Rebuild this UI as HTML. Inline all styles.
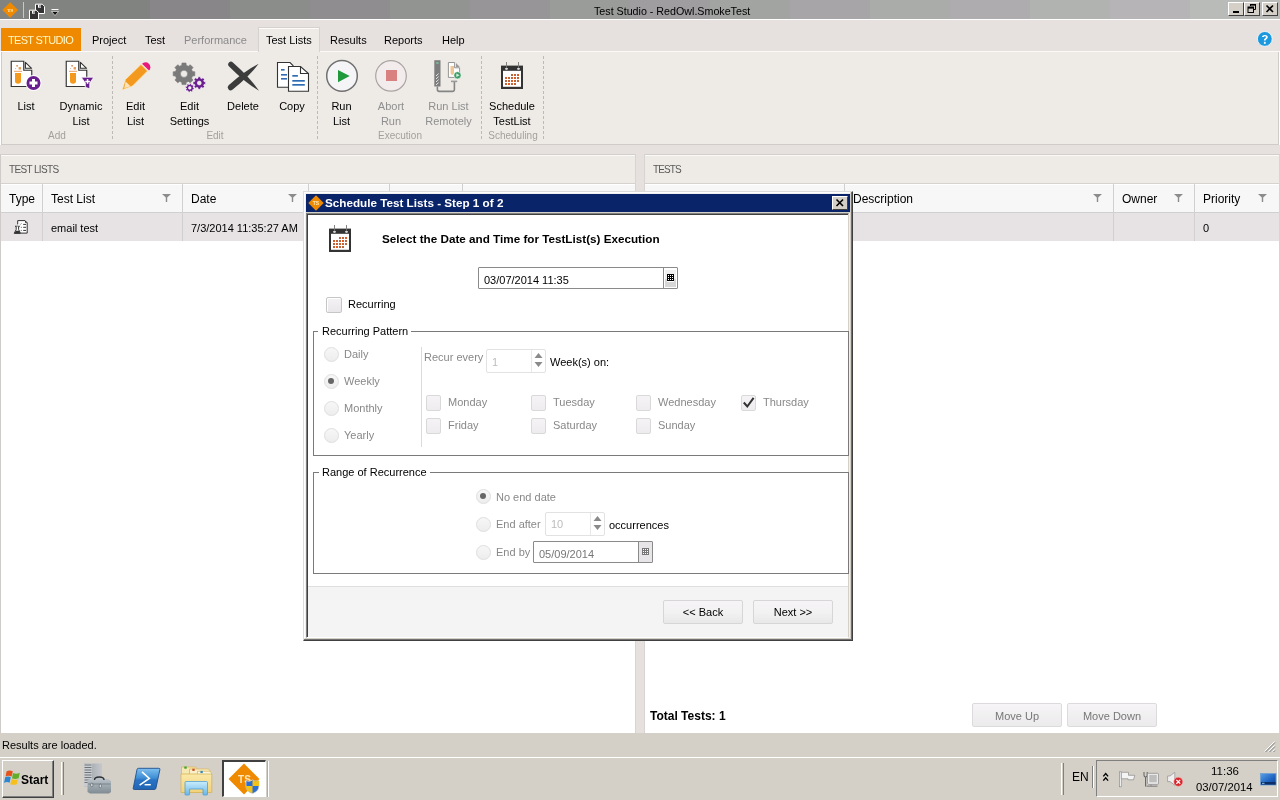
<!DOCTYPE html>
<html><head><meta charset="utf-8">
<style>
*{box-sizing:border-box;margin:0;padding:0}
html,body{width:1280px;height:800px;overflow:hidden;background:#fff}
body{position:relative;-webkit-font-smoothing:antialiased;font-family:"Liberation Sans",sans-serif;font-size:11px;color:#000}
.a{position:absolute}
.t{position:absolute;white-space:pre;line-height:1}
</style></head><body><div id="root" style="position:absolute;left:0;top:0;width:1280px;height:800px;overflow:hidden;will-change:transform">
<!-- TITLE BAR -->
<div class="a" id="titlebar" style="left:0;top:0;width:1280px;height:19px;background:linear-gradient(90deg,#80837f 0px,#80837f 150px,#888688 150px,#888688 230px,#8a8d89 230px,#8a8d89 310px,#8f8d8f 310px,#8f8d8f 390px,#919490 390px,#919490 470px,#979597 470px,#979597 550px,#999c98 550px,#999c98 630px,#9f9d9f 630px,#9f9d9f 710px,#a1a4a0 710px,#a1a4a0 790px,#a7a5a7 790px,#a7a5a7 870px,#a9aca8 870px,#a9aca8 950px,#aeacae 950px,#aeacae 1030px,#b0b3af 1030px,#b0b3af 1110px,#b6b4b6 1110px,#b6b4b6 1190px,#b8bbb7 1190px,#b8bbb7 1280px)"></div>
<div class="a" style="left:0;top:19px;width:1280px;height:1px;background:#fff"></div>
<div class="t" style="left:594px;top:6px;font-size:10.7px">Test Studio - RedOwl.SmokeTest</div>


<svg class="a" style="left:1px;top:1px" width="19" height="19" viewBox="0 0 19 19"><path d="M9.2 1.2 L17 9 L9.2 16.8 L1.4 9 Z" fill="#ef8a00"/><text x="9.2" y="10.8" font-family="Liberation Serif" font-size="5" font-weight="700" fill="#fff3c8" text-anchor="middle">TS</text></svg>
<div class="a" style="left:23px;top:2px;width:1px;height:16px;background:#c8c8c8"></div>
<svg class="a" style="left:28px;top:3px" width="18" height="17" viewBox="0 0 18 17"><path d="M7.5 1.2 H14.3 L16.5 3.4 V10.5 H7.5 Z" fill="#333" stroke="#fff" stroke-width="1"/><rect x="10" y="1.7" width="3" height="3" fill="#fff"/><rect x="11.5" y="2.2" width="1" height="2" fill="#333"/><path d="M1.5 7.2 H8.3 L10.5 9.4 V16.5 H1.5 Z" fill="#333" stroke="#fff" stroke-width="1"/><rect x="4" y="7.7" width="3" height="3" fill="#fff"/><rect x="5.5" y="8.2" width="1" height="2" fill="#333"/></svg>
<svg class="a" style="left:50px;top:7px" width="10" height="10" viewBox="0 0 10 10"><rect x="1.5" y="2" width="7" height="1" fill="#fff"/><path d="M1.5 4.5 H8.5 L5 8.5 Z" fill="#111" stroke="#fff" stroke-width="0.6"/></svg>
<!-- window buttons -->
<div class="a" style="left:1228px;top:2px;width:16px;height:14px;background:#d4d0c8;border-style:solid;border-width:1px;border-color:#fff #404040 #404040 #fff"></div>
<div class="a" style="left:1233px;top:11px;width:6px;height:2px;background:#000"></div>
<div class="a" style="left:1244px;top:2px;width:16px;height:14px;background:#d4d0c8;border-style:solid;border-width:1px;border-color:#fff #404040 #404040 #fff"></div>
<svg class="a" style="left:1244px;top:2px" width="16" height="14" viewBox="0 0 16 14"><path d="M6.5 2.5 H11.5 V7.5 H10 M6.5 2.5 V4" fill="none" stroke="#000" stroke-width="1"/><rect x="6" y="2" width="6" height="1.6" fill="#000"/><rect x="4" y="5" width="5.5" height="5.5" fill="none" stroke="#000" stroke-width="1"/><rect x="4" y="5" width="5.5" height="1.6" fill="#000"/></svg>
<div class="a" style="left:1262px;top:2px;width:16px;height:14px;background:#d4d0c8;border-style:solid;border-width:1px;border-color:#fff #404040 #404040 #fff"></div>
<svg class="a" style="left:1262px;top:2px" width="16" height="14" viewBox="0 0 16 14"><path d="M4.5 3.5 L11 10 M11 3.5 L4.5 10" stroke="#000" stroke-width="1.6"/></svg>

<!-- RIBBON TABS ROW -->
<div class="a" style="left:0;top:20px;width:1280px;height:31px;background:#e6e0df"></div>
<div class="a" style="left:1px;top:28px;width:80px;height:23px;background:#ef8a00"></div>
<div class="t" style="left:8px;top:35px;color:#fff8c8;font-size:11px;letter-spacing:-0.68px">TEST STUDIO</div>

<!-- RIBBON BODY -->
<div class="a" style="left:1px;top:51px;width:1278px;height:94px;background:#eeebe7;border:1px solid #cfcbc8;border-top:none"></div>


<!-- RIBBON TAB TEXTS -->
<div class="a" style="left:1px;top:51px;width:1278px;height:1px;background:#fbfaf9"></div><div class="a" style="left:258px;top:27px;width:62px;height:25px;background:#eeebe7;border:1px solid #d6d2cf;border-bottom:none;box-shadow:inset 0 1px 0 #fdfcfb"></div>
<div class="t" style="left:92px;top:35px">Project</div>
<div class="t" style="left:145px;top:35px">Test</div>
<div class="t" style="left:184px;top:35px;color:#8a8a8a">Performance</div>
<div class="t" style="left:266px;top:35px">Test Lists</div>
<div class="t" style="left:330px;top:35px">Results</div>
<div class="t" style="left:384px;top:35px">Reports</div>
<div class="t" style="left:442px;top:35px">Help</div>
<!-- help icon -->
<svg class="a" style="left:1257px;top:31px" width="16" height="16" viewBox="0 0 16 16"><circle cx="7.8" cy="7.9" r="7.4" fill="#1b98de" stroke="#fff" stroke-width="0.8"/><path d="M5 6 C5 3.2 10.8 3.2 10.8 6 C10.8 8 8.6 8 8.6 9.6 H6.9 C6.9 7.2 9 7.4 9 6 C9 5 6.8 5 6.8 6 Z" fill="#fff"/><rect x="6.9" y="10.8" width="1.8" height="2" fill="#fff"/></svg>

<!-- RIBBON BUTTON LABELS -->
<div class="t" style="left:0;width:52px;text-align:center;top:101px">List</div>
<div class="t" style="left:51px;width:60px;text-align:center;top:101px">Dynamic</div>
<div class="t" style="left:51px;width:60px;text-align:center;top:116px">List</div>
<div class="t" style="left:113px;width:45px;text-align:center;top:101px">Edit</div>
<div class="t" style="left:113px;width:45px;text-align:center;top:116px">List</div>
<div class="t" style="left:160px;width:59px;text-align:center;top:101px">Edit</div>
<div class="t" style="left:160px;width:59px;text-align:center;top:116px">Settings</div>
<div class="t" style="left:220px;width:46px;text-align:center;top:101px">Delete</div>
<div class="t" style="left:268px;width:48px;text-align:center;top:101px">Copy</div>
<div class="t" style="left:320px;width:43px;text-align:center;top:101px">Run</div>
<div class="t" style="left:320px;width:43px;text-align:center;top:116px">List</div>
<div class="t" style="left:366px;width:50px;text-align:center;top:101px;color:#8f8f8f">Abort</div>
<div class="t" style="left:366px;width:50px;text-align:center;top:116px;color:#8f8f8f">Run</div>
<div class="t" style="left:418px;width:61px;text-align:center;top:101px;color:#8f8f8f">Run List</div>
<div class="t" style="left:418px;width:61px;text-align:center;top:116px;color:#8f8f8f">Remotely</div>
<div class="t" style="left:484px;width:56px;text-align:center;top:101px">Schedule</div>
<div class="t" style="left:484px;width:56px;text-align:center;top:116px">TestList</div>
<div class="t" style="left:7px;width:100px;text-align:center;top:131px;font-size:10px;color:#a39f9b">Add</div>
<div class="t" style="left:165px;width:100px;text-align:center;top:131px;font-size:10px;color:#a39f9b">Edit</div>
<div class="t" style="left:350px;width:100px;text-align:center;top:131px;font-size:10px;color:#a39f9b">Execution</div>
<div class="t" style="left:463px;width:100px;text-align:center;top:131px;font-size:10px;color:#a39f9b">Scheduling</div>
<!-- separators -->
<div class="a" style="left:112px;top:56px;width:1px;height:85px;background:repeating-linear-gradient(180deg,#bdb9b5 0,#bdb9b5 3px,transparent 3px,transparent 5px)"></div>
<div class="a" style="left:317px;top:56px;width:1px;height:85px;background:repeating-linear-gradient(180deg,#bdb9b5 0,#bdb9b5 3px,transparent 3px,transparent 5px)"></div>
<div class="a" style="left:481px;top:56px;width:1px;height:85px;background:repeating-linear-gradient(180deg,#bdb9b5 0,#bdb9b5 3px,transparent 3px,transparent 5px)"></div>
<div class="a" style="left:543px;top:56px;width:1px;height:85px;background:repeating-linear-gradient(180deg,#bdb9b5 0,#bdb9b5 3px,transparent 3px,transparent 5px)"></div>
<!-- ICONS -->
<svg class="a" style="left:0;top:50px" width="560" height="50" viewBox="0 50 560 50">
 <!-- List -->
 <path d="M11.25 61.25 H23.75 V70.25 H31.75 V86.5 H11.25 Z" fill="#fff" stroke="#333" stroke-width="1.15"/>
 <path d="M25.4 62.3 V68.3 H31.6 Z" fill="#fff" stroke="#333" stroke-width="1.1" stroke-linejoin="round"/>
 <rect x="14" y="70.8" width="8" height="1" fill="#e8a060"/>
 <path d="M15 73 H21 V81 A3 2.8 0 0 1 15 81 Z" fill="#f39a1e"/>
 <rect x="16.3" y="65" width="1.6" height="1.6" fill="#d8935e"/><rect x="18.6" y="67.1" width="2.4" height="2.4" fill="#e89a50"/><rect x="15.2" y="68.2" width="0.9" height="0.9" fill="#c9a070"/>

 <circle cx="33.5" cy="83" r="8" fill="#fff"/><circle cx="33.5" cy="83" r="7" fill="#6a1f8f"/>
 <path d="M32 79 H35 V81.5 H37.5 V84.5 H35 V87 H32 V84.5 H29.5 V81.5 H32 Z" fill="#fff"/>
 <!-- Dynamic List -->
 <path d="M66.25 61.25 H78.75 V70.25 H86.75 V86.5 H66.25 Z" fill="#fff" stroke="#333" stroke-width="1.15"/>
 <path d="M80.4 62.3 V68.3 H86.6 Z" fill="#fff" stroke="#333" stroke-width="1.1" stroke-linejoin="round"/>
 <rect x="69" y="70.8" width="8" height="1" fill="#e8a060"/>
 <path d="M70 73 H76 V81 A3 2.8 0 0 1 70 81 Z" fill="#f39a1e"/>
 <rect x="71.3" y="65" width="1.6" height="1.6" fill="#d8935e"/><rect x="73.6" y="67.1" width="2.4" height="2.4" fill="#e89a50"/><rect x="70.2" y="68.2" width="0.9" height="0.9" fill="#c9a070"/>

 <path d="M81.2 77.2 H93.8 L89.8 83 V88.8 L85.3 87.3 V83 Z" fill="#6a1f8f" stroke="#fff" stroke-width="0.8" stroke-linejoin="round"/>
 <path d="M86.8 79.1 H88.3 V80.7 H89.9 V82.2 H88.3 V83.8 H86.8 V82.2 H85.2 V80.7 H86.8 Z" fill="#fff"/>
 <!-- Pencil -->
 <path d="M125.5 79.5 L141 64.5 L147.5 71 L132.5 86 L122.3 89.8 Z" fill="#f39a1e" stroke="#ffe7b0" stroke-width="0.6"/>
 <path d="M125.6 81.5 L130.5 86.2 L124.2 88.3 Z" fill="#fde4bd"/>
 <path d="M142 63.8 A4.6 4.6 0 0 1 149 70.6 Z" fill="#e8197d"/>
 <!-- Gears -->
 <path d="M181.74 65.29 L181.99 62.98 L186.01 62.98 L186.26 65.29 L188.42 66.19 L190.23 64.73 L193.07 67.57 L191.61 69.38 L192.51 71.54 L194.82 71.79 L194.82 75.81 L192.51 76.06 L191.61 78.22 L193.07 80.03 L190.23 82.87 L188.42 81.41 L186.26 82.31 L186.01 84.62 L181.99 84.62 L181.74 82.31 L179.58 81.41 L177.77 82.87 L174.93 80.03 L176.39 78.22 L175.49 76.06 L173.18 75.81 L173.18 71.79 L175.49 71.54 L176.39 69.38 L174.93 67.57 L177.77 64.73 L179.58 66.19 Z M187.60 73.80 A3.6 3.6 0 1 0 180.40 73.80 A3.6 3.6 0 1 0 187.60 73.80 Z" fill="#7a7a7a" fill-rule="evenodd" stroke="#7a7a7a" stroke-width="0.6" stroke-linejoin="round"/>
 <path d="M198.02 78.17 L198.13 76.71 L200.47 76.71 L200.58 78.17 L201.81 78.68 L202.92 77.72 L204.58 79.38 L203.62 80.49 L204.13 81.72 L205.59 81.83 L205.59 84.17 L204.13 84.28 L203.62 85.51 L204.58 86.62 L202.92 88.28 L201.81 87.32 L200.58 87.83 L200.47 89.29 L198.13 89.29 L198.02 87.83 L196.79 87.32 L195.68 88.28 L194.02 86.62 L194.98 85.51 L194.47 84.28 L193.01 84.17 L193.01 81.83 L194.47 81.72 L194.98 80.49 L194.02 79.38 L195.68 77.72 L196.79 78.68 Z M201.30 83.00 A2.0 2.0 0 1 0 197.30 83.00 A2.0 2.0 0 1 0 201.30 83.00 Z" fill="#6a1f8f" fill-rule="evenodd" stroke="#fff" stroke-width="0.5"/>
 <path d="M189.60 84.51 L189.87 83.50 L191.45 83.82 L191.31 84.85 L192.06 85.36 L192.96 84.84 L193.85 86.18 L193.02 86.81 L193.19 87.70 L194.20 87.97 L193.88 89.55 L192.85 89.41 L192.34 90.16 L192.86 91.06 L191.52 91.95 L190.89 91.12 L190.00 91.29 L189.73 92.30 L188.15 91.98 L188.29 90.95 L187.54 90.44 L186.64 90.96 L185.75 89.62 L186.58 88.99 L186.41 88.10 L185.40 87.83 L185.72 86.25 L186.75 86.39 L187.26 85.64 L186.74 84.74 L188.08 83.85 L188.71 84.68 Z M191.20 87.90 A1.4 1.4 0 1 0 188.40 87.90 A1.4 1.4 0 1 0 191.20 87.90 Z" fill="#6a1f8f" fill-rule="evenodd" stroke="#fff" stroke-width="0.5"/>
 <!-- Delete X -->
 <path d="M232.9 62.5 Q250.2 77.7 259 90.8 Q245.4 82.9 229.1 66.5 A2.75 2.75 0 0 1 232.9 62.5 Z" fill="#3c3c3c"/>
 <path d="M228.6 85.2 Q245.2 70.6 258.7 63.8 Q249.7 76 232.4 89.8 A3 3 0 0 1 228.6 85.2 Z" fill="#3c3c3c"/>
 <!-- Copy -->
 <path d="M277.5 62.5 H290 L293 65.5 V87.3 H277.5 Z" fill="#fff" stroke="#333" stroke-width="1.1"/>
 <rect x="281" y="69" width="3.6" height="1.6" fill="#2e6db4"/><rect x="281" y="74" width="6" height="1.6" fill="#2e6db4"/><rect x="281" y="78" width="6" height="1.6" fill="#2e6db4"/>
 <path d="M288.5 66.5 H300.5 L308.5 73.5 V91.3 H288.5 Z" fill="#fff" stroke="#333" stroke-width="1.1"/>
 <path d="M300.5 66.5 V73.5 H308.5" fill="none" stroke="#333" stroke-width="1.1"/>
 <rect x="292.3" y="75" width="5.6" height="1.7" fill="#2e6db4"/><rect x="292.3" y="80" width="12.5" height="1.7" fill="#2e6db4"/><rect x="292.3" y="84" width="12.5" height="1.7" fill="#2e6db4"/>
 <!-- Run -->
 <circle cx="342" cy="75.9" r="15.3" fill="#f5f5f8" stroke="#707070" stroke-width="1.5"/>
 <path d="M338 70 V82.2 L349.7 75.9 Z" fill="#1e9a3c"/>
 <!-- Abort -->
 <circle cx="391" cy="75.9" r="15.3" fill="#f2eced" stroke="#aba3a3" stroke-width="1.2"/>
 <rect x="386" y="70" width="11" height="11" fill="#d98080"/>
 <!-- Run list remotely -->
 <rect x="434.3" y="60.2" width="6.2" height="26.3" fill="#7d7d7d"/>
 <ellipse cx="437.4" cy="63" rx="1.5" ry="1" fill="#79b898"/>
 <path d="M436 76 L438.6 73.6 M436 79 L438.6 76.6 M436 82 L438.6 79.6 M436 85 L438.6 82.6" stroke="#e6e6e6" stroke-width="1"/>
 <path d="M437.4 86.5 V89.6 A1.8 1.8 0 0 0 439.2 91.4 H452.6 A1.8 1.8 0 0 0 454.4 89.6 V81.8" fill="none" stroke="#858585" stroke-width="1.6"/>
 <rect x="451" y="80.6" width="6.2" height="1.6" fill="#9a9a9a"/>
 <path d="M448.4 62.5 H454.6 V67.8 H459.6 V77.4 H448.4 Z" fill="#fff" stroke="#8a8a8a" stroke-width="0.9"/>
 <path d="M456 63 L459.8 67 H456 Z" fill="#9a9a9a"/>
 <path d="M450.5 66 H454 V73 A1.75 2 0 0 1 450.5 73 Z" fill="#f1c595"/>
 <circle cx="457.5" cy="75.3" r="3.6" fill="#3d9e68" stroke="#fff" stroke-width="0.5"/>
 <path d="M456.3 73.5 V77.1 L459.6 75.3 Z" fill="#d8f0e0"/>
 <!-- Calendar -->
 <rect x="501" y="65.6" width="22" height="23.4" fill="#333"/>
 <rect x="503" y="70.8" width="18" height="16" fill="#fff"/>
 <rect x="506" y="62" width="0.9" height="6.5" fill="#777"/><rect x="518" y="62" width="0.9" height="6.5" fill="#777"/>
 <path d="M505 68.3 A1.5 1.5 0 0 0 508 68.3 Z M517 68.3 A1.5 1.5 0 0 0 520 68.3 Z" fill="#fff"/>
 <g shape-rendering="crispEdges"><rect x="511" y="74" width="2" height="2" fill="#c0643a"/><rect x="514" y="74" width="2" height="2" fill="#c0643a"/><rect x="517" y="74" width="2" height="2" fill="#e05a22"/><rect x="505" y="77" width="2" height="2" fill="#e05a22"/><rect x="508" y="77" width="2" height="2" fill="#c0643a"/><rect x="511" y="77" width="2" height="2" fill="#c0643a"/><rect x="514" y="77" width="2" height="2" fill="#e05a22"/><rect x="517" y="77" width="2" height="2" fill="#c0643a"/><rect x="505" y="80" width="2" height="2" fill="#c0643a"/><rect x="508" y="80" width="2" height="2" fill="#c0643a"/><rect x="511" y="80" width="2" height="2" fill="#e05a22"/><rect x="514" y="80" width="2" height="2" fill="#c0643a"/><rect x="517" y="80" width="2" height="2" fill="#c0643a"/><rect x="505" y="83" width="2" height="2" fill="#c0643a"/><rect x="508" y="83" width="2" height="2" fill="#e05a22"/><rect x="511" y="83" width="2" height="2" fill="#c0643a"/><rect x="514" y="83" width="2" height="2" fill="#c0643a"/></g>
</svg>

<!-- GAP -->
<div class="a" style="left:0;top:145px;width:1280px;height:10px;background:#e6e0df"></div>

<!-- PANELS -->
<div class="a" style="left:0;top:154px;width:636px;height:1px;background:#d3cfcc"></div><div class="a" style="left:644px;top:154px;width:636px;height:1px;background:#d3cfcc"></div>
<div class="a" style="left:0;top:155px;width:636px;height:578px;background:#fff;border-left:1px solid #cfcbc8;border-right:1px solid #d8d4d2"></div>
<div class="a" style="left:1px;top:155px;width:634px;height:29px;background:#eeebe7;border-top:1px solid #fbfaf9;border-bottom:1px solid #d6d2cf"></div>
<div class="t" style="left:9px;top:165px;font-size:10px;color:#5a5a5a;letter-spacing:-0.65px">TEST LISTS</div>
<div class="a" style="left:1px;top:184px;width:634px;height:29px;background:#f7f7f7;border-bottom:1px solid #d0d0d0;box-shadow:inset 0 1px 0 #fff"></div>
<div class="a" style="left:1px;top:213px;width:634px;height:28px;background:#e7e3e5"></div>
<div class="a" style="left:42px;top:184px;width:1px;height:57px;background:#d0d0d0"></div>
<div class="a" style="left:182px;top:184px;width:1px;height:57px;background:#d0d0d0"></div>
<div class="a" style="left:308px;top:184px;width:1px;height:57px;background:#d0d0d0"></div>
<div class="a" style="left:389px;top:184px;width:1px;height:57px;background:#d0d0d0"></div>
<div class="a" style="left:462px;top:184px;width:1px;height:57px;background:#d0d0d0"></div>
<div class="t" style="left:9px;top:193px;font-size:12px">Type</div>
<div class="t" style="left:51px;top:193px;font-size:12px">Test List</div>
<div class="t" style="left:191px;top:193px;font-size:12px">Date</div>
<svg class="a" style="left:162px;top:194px" width="9" height="8" viewBox="0 0 9 8"><path d="M0 0 H9 L5.2 3.6 V8 H3.8 V3.6 Z" fill="#8c8c8c"/></svg><svg class="a" style="left:288px;top:194px" width="9" height="8" viewBox="0 0 9 8"><path d="M0 0 H9 L5.2 3.6 V8 H3.8 V3.6 Z" fill="#8c8c8c"/></svg>
<svg class="a" style="left:13px;top:218px" width="16" height="17" viewBox="13 218 16 17"><path d="M17.7 224.5 V220.6 H25 L27.2 222.8 V233.1 H20.5" fill="#fff" stroke="#333" stroke-width="1"/><path d="M17.7 224.5 H20.5 V233.1 H17.7 Z" fill="#fff"/><path d="M25 220.6 L27.2 222.8 H25 Z" fill="#333"/><path d="M23.2 224.4 H26 M23.2 227.3 H26 M23.2 230.4 H26" stroke="#333" stroke-width="1"/><rect x="20.8" y="226.8" width="1" height="1" fill="#666"/><rect x="20.8" y="229.9" width="1" height="1" fill="#666"/><path d="M19.6 224 L20.4 224.6 L21.8 223" fill="none" stroke="#777" stroke-width="0.6"/><path d="M15 226.3 H19.8" stroke="#333" stroke-width="1.1"/><path d="M16.2 226.5 V229.5 L14.2 233.4 H20.6 L18.6 229.5 V226.5" fill="#fff" stroke="#333" stroke-width="1"/><path d="M14.5 233.3 L15.9 230.8 H19 L20.4 233.3 Z" fill="#333"/></svg>
<div class="t" style="left:51px;top:223px">email test</div>
<div class="t" style="left:191px;top:223px">7/3/2014 11:35:27 AM</div>

<div class="a" style="left:636px;top:155px;width:8px;height:578px;background:#e6e0df"></div>

<div class="a" style="left:644px;top:155px;width:636px;height:578px;background:#fff;border-left:1px solid #d8d4d2;border-right:1px solid #d8d4d2"></div>
<div class="a" style="left:645px;top:155px;width:634px;height:29px;background:#eeebe7;border-top:1px solid #fbfaf9;border-bottom:1px solid #d6d2cf"></div>
<div class="t" style="left:653px;top:165px;font-size:10px;color:#5a5a5a;letter-spacing:-0.9px">TESTS</div>
<div class="a" style="left:645px;top:184px;width:634px;height:29px;background:#f7f7f7;border-bottom:1px solid #d0d0d0;box-shadow:inset 0 1px 0 #fff"></div>
<div class="a" style="left:645px;top:213px;width:634px;height:28px;background:#e7e3e5"></div>
<div class="a" style="left:844px;top:184px;width:1px;height:57px;background:#d0d0d0"></div>
<div class="a" style="left:1113px;top:184px;width:1px;height:57px;background:#d0d0d0"></div>
<div class="a" style="left:1194px;top:184px;width:1px;height:57px;background:#d0d0d0"></div>
<div class="t" style="left:853px;top:193px;font-size:12px">Description</div>
<div class="t" style="left:1122px;top:193px;font-size:12px">Owner</div>
<div class="t" style="left:1203px;top:193px;font-size:12px">Priority</div>
<svg class="a" style="left:1093px;top:194px" width="9" height="8" viewBox="0 0 9 8"><path d="M0 0 H9 L5.2 3.6 V8 H3.8 V3.6 Z" fill="#8c8c8c"/></svg><svg class="a" style="left:1174px;top:194px" width="9" height="8" viewBox="0 0 9 8"><path d="M0 0 H9 L5.2 3.6 V8 H3.8 V3.6 Z" fill="#8c8c8c"/></svg><svg class="a" style="left:1258px;top:194px" width="9" height="8" viewBox="0 0 9 8"><path d="M0 0 H9 L5.2 3.6 V8 H3.8 V3.6 Z" fill="#8c8c8c"/></svg>
<div class="t" style="left:1203px;top:223px">0</div>
<div class="t" style="left:650px;top:710px;font-weight:700;font-size:12px">Total Tests: 1</div>
<div class="a" style="left:972px;top:703px;width:90px;height:24px;background:linear-gradient(#f6f4f6,#ecebec);border:1px solid #dcdadc;border-radius:2px"></div>
<div class="t" style="left:972px;top:711px;width:90px;text-align:center;color:#777">Move Up</div>
<div class="a" style="left:1067px;top:703px;width:90px;height:24px;background:linear-gradient(#f6f4f6,#ecebec);border:1px solid #dcdadc;border-radius:2px"></div>
<div class="t" style="left:1067px;top:711px;width:90px;text-align:center;color:#777">Move Down</div>

<!-- STATUS BAR -->
<div class="a" style="left:0;top:733px;width:1280px;height:24px;background:#d4d0c8"></div>
<div class="t" style="left:2px;top:740px">Results are loaded.</div>

<!-- TASKBAR -->
<div class="a" style="left:0;top:757px;width:1280px;height:43px;background:#d4d0c8;border-top:1px solid #fff"></div>
<svg class="a" style="left:1262px;top:739px" width="14" height="14" viewBox="0 0 14 14"><path d="M12.5 2.5 L2.5 12.5 M12.5 6.5 L6.5 12.5 M12.5 10.5 L10.5 12.5" stroke="#fff" stroke-width="1"/><path d="M13 3.5 L3.5 13 M13 7.5 L7.5 13 M13 11.5 L11.5 13" stroke="#808080" stroke-width="1"/></svg>
<div class="a" style="left:2px;top:760px;width:52px;height:38px;background:#d4d0c8;border-style:solid;border-width:1px;border-color:#fff #404040 #404040 #fff;box-shadow:inset -1px -1px 0 #808080"></div>
<svg class="a" style="left:2px;top:766px" width="20" height="22" viewBox="2 766 20 22"><path d="M6.5 771.5 C8.5 770 10.5 770.2 12.8 771.3 L11.6 776.6 C9.6 775.5 7.6 775.3 5.6 776.5 Z" fill="#e5531a"/><path d="M13 773 C15.5 774 17.5 773.8 19.8 772.8 L18.7 778.3 C16.3 779.2 14.4 779.2 12 778.5 Z" fill="#64ad2a"/><path d="M5.2 777.3 C7 776.3 9 776.2 10.8 777.3 L9.6 782.8 C7.8 781.7 5.8 781.8 4 783 Z" fill="#2d86d2"/><path d="M11.6 779 C13.6 780 15.6 780 17.8 779.2 L16.8 784.2 C14.6 785 12.5 785 10.3 784.2 Z" fill="#f6c01c"/></svg>
<div class="t" style="left:21px;top:774px;font-weight:700;font-size:12px">Start</div>
<div class="a" style="left:61px;top:762px;width:3px;height:33px;border-left:1px solid #fff;border-right:1px solid #808080"></div>
<!-- server mgr -->
<svg class="a" style="left:82px;top:762px" width="30" height="33" viewBox="82 762 30 33"><defs><linearGradient id="tw" x1="0" x2="1"><stop offset="0" stop-color="#9aa0a6"/><stop offset="1" stop-color="#c4c8cc"/></linearGradient><linearGradient id="tb" x1="0" y1="0" x2="0" y2="1"><stop offset="0" stop-color="#b9c2c8"/><stop offset="1" stop-color="#7f8a92"/></linearGradient></defs>
<rect x="84" y="763.5" width="18" height="23" fill="url(#tw)"/><rect x="84" y="763.5" width="8" height="23" fill="#c9cdd1"/>
<path d="M84.5 765 H91.5 M84.5 767.5 H91.5 M84.5 770 H91.5 M84.5 772.5 H91.5 M84.5 775 H91.5 M84.5 777.5 H91.5 M84.5 780 H91.5 M84.5 782.5 H91.5" stroke="#6f7479" stroke-width="1"/>
<path d="M87.5 780 L90 779 H108 L111 781 V792 L109 793.5 H90 L87.5 792 Z" fill="url(#tb)"/>
<path d="M88 784 H110.5" stroke="#6d7880" stroke-width="0.8"/>
<path d="M94.5 780 C94.5 776 104 776 104 780" fill="none" stroke="#2f3438" stroke-width="1.4"/>
<rect x="90.8" y="783.2" width="2" height="3.5" rx="0.8" fill="#e8ecef" stroke="#4b545a" stroke-width="0.6"/><rect x="99.3" y="784.2" width="2" height="3.5" rx="0.8" fill="#e8ecef" stroke="#4b545a" stroke-width="0.6"/>
</svg>
<!-- powershell -->
<svg class="a" style="left:130px;top:765px" width="34" height="28" viewBox="130 765 34 28"><defs><linearGradient id="ps" x1="0" y1="0" x2="0" y2="1"><stop offset="0" stop-color="#7fc0ee"/><stop offset="0.45" stop-color="#3f8fd6"/><stop offset="0.55" stop-color="#2a73c4"/><stop offset="1" stop-color="#2064b4"/></linearGradient></defs>
<path d="M138.3 768.3 H158.8 Q160.2 768.3 159.9 769.6 L155.9 788.3 Q155.6 789.5 154.4 789.5 H134.3 Q132.9 789.5 133.2 788.2 L137 769.5 Q137.3 768.3 138.3 768.3 Z" fill="url(#ps)" stroke="#1f4f8f" stroke-width="0.9"/>
<path d="M142 771.8 L149.3 778.5 L139.6 785.2" fill="none" stroke="#fff" stroke-width="1.6"/>
<path d="M144.6 784.7 H150.8" stroke="#fff" stroke-width="1.5"/></svg>
<!-- explorer -->
<svg class="a" style="left:179px;top:764px" width="35" height="33" viewBox="179 764 35 33"><defs><linearGradient id="fd" x1="0" y1="0" x2="0" y2="1"><stop offset="0" stop-color="#fbe9a8"/><stop offset="1" stop-color="#f2d27a"/></linearGradient><linearGradient id="fb" x1="0" y1="0" x2="0" y2="1"><stop offset="0" stop-color="#c8ecfb"/><stop offset="1" stop-color="#6ab7e6"/></linearGradient></defs>
<path d="M181.5 767 H195.5 L197 768.8 V792 H181.5 Z" fill="#f7e7b0" stroke="#d9b65c" stroke-width="0.8"/>
<path d="M189.5 769 H208.5 L210 770.8 V792 H189.5 Z" fill="#faf0c8" stroke="#d9b65c" stroke-width="0.8"/>
<path d="M197.5 771.2 H210 L211.5 773 V792 H197.5 Z" fill="#fdf6dc" stroke="#d9b65c" stroke-width="0.8"/>
<rect x="184.3" y="766.5" width="2.4" height="2.2" fill="#3aa33a"/><rect x="192.3" y="768.7" width="2.4" height="2.2" fill="#c8502a"/><rect x="200.4" y="770.9" width="2.4" height="2.2" fill="#3a8cc0"/>
<path d="M181 774 H211.8 V792.5 H181 Z" fill="url(#fd)" stroke="#d4b45a" stroke-width="0.8"/>
<path d="M185 782.5 Q185 781.5 186 781.5 H206.5 Q207.5 781.5 207.5 782.5 V794.3 Q207.5 795 206.8 795 H203.7 Q203 795 203 794.3 V789 H189.6 V794.3 Q189.6 795 188.9 795 H185.7 Q185 795 185 794.3 Z" fill="url(#fb)" stroke="#4f9fd4" stroke-width="0.8"/></svg>
<!-- active TS -->
<div class="a" style="left:222px;top:760px;width:44px;height:37px;background:#fff;border-style:solid;border-width:2px 1px 1px 2px;border-color:#404040 #fff #fff #404040"></div>
<svg class="a" style="left:227px;top:762px" width="36" height="34" viewBox="0 0 36 34"><path d="M17 1.5 L32.5 17 L17 32.5 L1.5 17 Z" fill="#ef8a00"/><text x="17.5" y="20.5" font-family="Liberation Sans" font-size="10" font-weight="700" fill="#fde8c0" text-anchor="middle">TS</text><path d="M25.5 18 C28 19.5 30 19.5 32 18.5 V24 C32 28 29 30.5 25.5 31.5 C22 30.5 19 28 19 24 V18.5 C21 19.5 23 19.5 25.5 18 Z" fill="#2d6fd0" stroke="#ddd" stroke-width="0.8"/><path d="M25.5 18.3 C28 19.6 30 19.6 32 18.6 V24 H25.5 Z M19 24 H25.5 V31.3 C22 30.3 19 28 19 24 Z" fill="#f3c21a"/></svg>
<div class="a" style="left:267px;top:761px;width:2px;height:36px;background:#fff;border-left:1px solid #b0aca4"></div>
<!-- tray -->
<div class="a" style="left:1061px;top:763px;width:3px;height:32px;border-left:1px solid #fff;border-right:1px solid #808080"></div>
<div class="t" style="left:1072px;top:771px;font-size:12px">EN</div>
<div class="a" style="left:1092px;top:766px;width:2px;height:22px;border-left:1px solid #808080;border-right:1px solid #fff"></div>
<div class="a" style="left:1096px;top:760px;width:182px;height:37px;border-style:solid;border-width:1px;border-color:#808080 #fff #fff #808080"></div>
<svg class="a" style="left:1098px;top:766px" width="90" height="26" viewBox="1098 766 90 26">
<path d="M1103.3 776.4 L1105.7 773.6 L1108.1 776.4 M1103.3 780.6 L1105.7 777.8 L1108.1 780.6" fill="none" stroke="#000" stroke-width="1.4"/>
<rect x="1119.4" y="771.8" width="1.8" height="15" fill="#fff" stroke="#8a8a8a" stroke-width="0.7"/>
<path d="M1121.3 772.3 H1128.5 V775.3 H1134.8 L1133.5 779.8 H1128 V778.8 H1121.3 Z" fill="#f4f4f4" stroke="#8a8a8a" stroke-width="0.7"/>
<path d="M1144 772 V775.3 Q1144 777 1145.6 777 Q1147.2 777 1147.2 775.3 V772" fill="none" stroke="#6a6a6a" stroke-width="1.1"/>
<path d="M1145.6 777 V786.6" stroke="#6a6a6a" stroke-width="1.2"/>
<rect x="1147.6" y="773.3" width="10.8" height="11" rx="0.8" fill="#f2f2f2" stroke="#8a8a8a" stroke-width="0.8"/>
<rect x="1149.2" y="774.8" width="7.6" height="7.6" fill="#bdbdbd"/>
<path d="M1146.5 786.2 H1157.5" stroke="#8a8a8a" stroke-width="1.3"/><path d="M1151 784.3 V786" stroke="#8a8a8a" stroke-width="1"/>
<path d="M1167.6 776 H1170 L1174.8 772.3 V785.2 L1170 781.6 H1167.6 Z" fill="#f0f0f0" stroke="#8f8f8f" stroke-width="0.7"/>
<circle cx="1178.3" cy="781.8" r="4.5" fill="#d8252b" stroke="#f3b0b0" stroke-width="0.6"/>
<path d="M1176.4 779.9 L1180.2 783.7 M1180.2 779.9 L1176.4 783.7" stroke="#fff" stroke-width="1.3"/>
</svg>
<div class="t" style="left:1211px;top:766px;font-size:11.5px">11:36</div>
<div class="t" style="left:1196px;top:782px;font-size:11.3px">03/07/2014</div>
<svg class="a" style="left:1260px;top:772px" width="17" height="15" viewBox="0 0 17 15"><defs><linearGradient id="sd" x1="0" y1="0" x2="1" y2="1"><stop offset="0" stop-color="#5aa0e8"/><stop offset="0.6" stop-color="#1e62c0"/><stop offset="1" stop-color="#0e3f8c"/></linearGradient></defs><rect x="0.5" y="1.5" width="15.5" height="11.5" fill="url(#sd)" stroke="#6f9fd0" stroke-width="0.8"/><rect x="1" y="10" width="14.5" height="2.5" fill="#0b2f66"/><rect x="2" y="10.8" width="2.5" height="1" fill="#9cc8f0"/></svg>

<!-- DIALOG -->
<div class="a" style="left:303px;top:191px;width:550px;height:450px;background:#f0f0f0;border-style:solid;border-width:1px;border-color:#dcdcdc #404040 #404040 #dcdcdc;box-shadow:inset -1px -1px 0 #707070"></div>
<div class="a" style="left:304px;top:192px;width:547px;height:447px;border-style:solid;border-width:1px 1px 1px 1px;border-color:#fff #d4d0c8 #d4d0c8 #fff"></div>
<div class="a" style="left:306px;top:194px;width:544px;height:18px;background:#0a246a"></div>
<svg class="a" style="left:308px;top:195px" width="16" height="16" viewBox="0 0 16 16"><path d="M8 0.3 L15.7 8 L8 15.7 L0.3 8 Z" fill="#ef8a00"/><text x="8" y="10" font-family="Liberation Sans" font-size="5" font-weight="700" fill="#fde9b8" text-anchor="middle">TS</text></svg>
<div class="t" style="left:325px;top:197px;color:#fff;font-weight:700;font-size:11.7px">Schedule Test Lists - Step 1 of 2</div>
<div class="a" style="left:832px;top:196px;width:16px;height:14px;background:#d4d0c8;border-style:solid;border-width:1px;border-color:#fff #404040 #404040 #fff"></div>
<svg class="a" style="left:832px;top:196px" width="16" height="14" viewBox="0 0 16 14"><path d="M4.5 3.5 L11 10 M11 3.5 L4.5 10" stroke="#000" stroke-width="1.6"/></svg>
<div class="a" style="left:306px;top:212px;width:544px;height:1px;background:#d4d0c8"></div>
<div class="a" style="left:306px;top:213px;width:543px;height:425px;background:#fff;border-style:solid;border-width:1px;border-color:#808080 #d4d0c8 #fff #808080;box-shadow:inset 1px 1px 0 #404040"></div>
<!-- footer -->
<div class="a" style="left:308px;top:586px;width:540px;height:51px;background:#f4f4f4;border-top:1px solid #dedede"></div>
<div class="a" style="left:663px;top:600px;width:80px;height:24px;background:linear-gradient(#f6f4f6 0,#f3f2f3 50%,#e9e8e9 100%);border:1px solid #d6d6d6;border-radius:2px"></div>
<div class="t" style="left:663px;top:607px;width:80px;text-align:center">&lt;&lt; Back</div>
<div class="a" style="left:753px;top:600px;width:80px;height:24px;background:linear-gradient(#f6f4f6 0,#f3f2f3 50%,#e9e8e9 100%);border:1px solid #d6d6d6;border-radius:2px"></div>
<div class="t" style="left:753px;top:607px;width:80px;text-align:center">Next &gt;&gt;</div>
<!-- header -->
<svg class="a" style="left:328px;top:224px" width="24" height="28" viewBox="500 61 24 28"><rect x="501" y="65.6" width="22" height="23.4" fill="#333"/><rect x="503" y="70.8" width="18" height="16" fill="#fff"/><rect x="506" y="62" width="0.9" height="6.5" fill="#777"/><rect x="518" y="62" width="0.9" height="6.5" fill="#777"/><path d="M505 68.3 A1.5 1.5 0 0 0 508 68.3 Z M517 68.3 A1.5 1.5 0 0 0 520 68.3 Z" fill="#fff"/><g shape-rendering="crispEdges"><rect x="511" y="74" width="2" height="2" fill="#c0643a"/><rect x="514" y="74" width="2" height="2" fill="#c0643a"/><rect x="517" y="74" width="2" height="2" fill="#e05a22"/><rect x="505" y="77" width="2" height="2" fill="#e05a22"/><rect x="508" y="77" width="2" height="2" fill="#c0643a"/><rect x="511" y="77" width="2" height="2" fill="#c0643a"/><rect x="514" y="77" width="2" height="2" fill="#e05a22"/><rect x="517" y="77" width="2" height="2" fill="#c0643a"/><rect x="505" y="80" width="2" height="2" fill="#c0643a"/><rect x="508" y="80" width="2" height="2" fill="#c0643a"/><rect x="511" y="80" width="2" height="2" fill="#e05a22"/><rect x="514" y="80" width="2" height="2" fill="#c0643a"/><rect x="517" y="80" width="2" height="2" fill="#c0643a"/><rect x="505" y="83" width="2" height="2" fill="#c0643a"/><rect x="508" y="83" width="2" height="2" fill="#e05a22"/><rect x="511" y="83" width="2" height="2" fill="#c0643a"/><rect x="514" y="83" width="2" height="2" fill="#c0643a"/></g></svg>
<div class="t" style="left:382px;top:233px;font-weight:700;font-size:11.7px">Select the Date and Time for TestList(s) Execution</div>
<!-- date box -->
<div class="a" style="left:478px;top:267px;width:200px;height:22px;background:#fff;border:1px solid #8a8a8a;border-radius:1px"></div>
<div class="a" style="left:663px;top:268px;width:14px;height:20px;background:#fff;border-left:1px solid #8a8a8a"></div><div class="a" style="left:665px;top:270px;width:11px;height:17px;background:linear-gradient(#efefef 0,#efefef 50%,#d6d6d6 50%,#d6d6d6 100%)"></div><svg class="a" style="left:667px;top:274px" width="7" height="8" viewBox="0 0 7 8" shape-rendering="crispEdges"><rect x="0" y="0" width="7" height="7" fill="#000"/><rect x="1" y="1" width="1" height="1" fill="#fff"/><rect x="1" y="3" width="1" height="1" fill="#fff"/><rect x="1" y="5" width="1" height="1" fill="#fff"/><rect x="3" y="1" width="1" height="1" fill="#fff"/><rect x="3" y="3" width="1" height="1" fill="#fff"/><rect x="3" y="5" width="1" height="1" fill="#fff"/><rect x="5" y="1" width="1" height="1" fill="#fff"/><rect x="5" y="3" width="1" height="1" fill="#fff"/><rect x="5" y="5" width="1" height="1" fill="#fff"/><rect x="0" y="7" width="7" height="1" fill="#fff"/></svg>
<div class="t" style="left:484px;top:275px">03/07/2014 11:35</div>
<div class="a" style="left:326px;top:297px;width:16px;height:16px;background:linear-gradient(#f4f2f4,#e9e7e9);border:1px solid #c6c6c6;border-radius:2px;box-shadow:inset 1px 1px 0 #fff"></div>
<div class="t" style="left:348px;top:299px">Recurring</div>
<!-- recurring pattern group -->
<div class="a" style="left:313px;top:331px;width:536px;height:125px;border:1px solid #7a7a7a"></div>
<div class="a" style="left:318px;top:328px;width:93px;height:6px;background:#fff"></div>
<div class="t" style="left:322px;top:326px">Recurring Pattern</div>
<div class="a" style="left:323.5px;top:346.5px;width:15px;height:15px;border-radius:50%;background:linear-gradient(#f7f7f7,#ededed);border:1px solid #dedede"></div><div class="a" style="left:323.5px;top:373.5px;width:15px;height:15px;border-radius:50%;background:linear-gradient(#f7f7f7,#ededed);border:1px solid #dedede"></div><div class="a" style="left:328px;top:378px;width:6px;height:6px;border-radius:50%;background:#666"></div><div class="a" style="left:323.5px;top:400.5px;width:15px;height:15px;border-radius:50%;background:linear-gradient(#f7f7f7,#ededed);border:1px solid #dedede"></div><div class="a" style="left:323.5px;top:427.5px;width:15px;height:15px;border-radius:50%;background:linear-gradient(#f7f7f7,#ededed);border:1px solid #dedede"></div>
<div class="t" style="left:344px;top:349px;color:#888">Daily</div>
<div class="t" style="left:344px;top:376px;color:#888">Weekly</div>
<div class="t" style="left:344px;top:403px;color:#888">Monthly</div>
<div class="t" style="left:344px;top:430px;color:#888">Yearly</div>
<div class="a" style="left:421px;top:347px;width:1px;height:100px;background:#d4dce4"></div>
<div class="t" style="left:424px;top:352px;color:#888">Recur every</div>
<div class="a" style="left:486px;top:349px;width:60px;height:24px;background:#fff;border:1px solid #e2e2e2;border-radius:2px"></div><div class="a" style="left:531px;top:350px;width:1px;height:22px;background:#e8e8e8"></div><svg class="a" style="left:534px;top:352px" width="9" height="16" viewBox="0 0 9 16"><path d="M0.5 6 L4.5 1 L8.5 6 Z M0.5 10 L8.5 10 L4.5 15 Z" fill="#8a8a8a"/></svg><div class="t" style="left:492px;top:357px;color:#bdbdbd">1</div>
<div class="t" style="left:550px;top:357px">Week(s) on:</div>
<div class="a" style="left:426px;top:395px;width:15px;height:16px;background:linear-gradient(#f5f3f5,#eeecee);border:1px solid #d9d9d9;border-radius:2px"></div><div class="a" style="left:531px;top:395px;width:15px;height:16px;background:linear-gradient(#f5f3f5,#eeecee);border:1px solid #d9d9d9;border-radius:2px"></div><div class="a" style="left:636px;top:395px;width:15px;height:16px;background:linear-gradient(#f5f3f5,#eeecee);border:1px solid #d9d9d9;border-radius:2px"></div><div class="a" style="left:741px;top:395px;width:15px;height:16px;background:linear-gradient(#f5f3f5,#eeecee);border:1px solid #d9d9d9;border-radius:2px"></div><svg class="a" style="left:741px;top:395px" width="15" height="15" viewBox="0 0 15 15"><path d="M2.8 7.5 L6.3 11.5 L12.6 2.8" fill="none" stroke="#333" stroke-width="2"/></svg><div class="a" style="left:426px;top:418px;width:15px;height:16px;background:linear-gradient(#f5f3f5,#eeecee);border:1px solid #d9d9d9;border-radius:2px"></div><div class="a" style="left:531px;top:418px;width:15px;height:16px;background:linear-gradient(#f5f3f5,#eeecee);border:1px solid #d9d9d9;border-radius:2px"></div><div class="a" style="left:636px;top:418px;width:15px;height:16px;background:linear-gradient(#f5f3f5,#eeecee);border:1px solid #d9d9d9;border-radius:2px"></div>
<div class="t" style="left:448px;top:397px;color:#888">Monday</div>
<div class="t" style="left:553px;top:397px;color:#888">Tuesday</div>
<div class="t" style="left:658px;top:397px;color:#888">Wednesday</div>
<div class="t" style="left:763px;top:397px;color:#888">Thursday</div>
<div class="t" style="left:448px;top:420px;color:#888">Friday</div>
<div class="t" style="left:553px;top:420px;color:#888">Saturday</div>
<div class="t" style="left:658px;top:420px;color:#888">Sunday</div>
<!-- range group -->
<div class="a" style="left:313px;top:472px;width:536px;height:102px;border:1px solid #7a7a7a"></div>
<div class="a" style="left:319px;top:469px;width:111px;height:6px;background:#fff"></div>
<div class="t" style="left:322px;top:467px">Range of Recurrence</div>
<div class="a" style="left:475.5px;top:488.5px;width:15px;height:15px;border-radius:50%;background:linear-gradient(#f7f7f7,#ededed);border:1px solid #dedede"></div><div class="a" style="left:480px;top:493px;width:6px;height:6px;border-radius:50%;background:#666"></div><div class="a" style="left:475.5px;top:516.5px;width:15px;height:15px;border-radius:50%;background:linear-gradient(#f7f7f7,#ededed);border:1px solid #dedede"></div><div class="a" style="left:475.5px;top:544.5px;width:15px;height:15px;border-radius:50%;background:linear-gradient(#f7f7f7,#ededed);border:1px solid #dedede"></div>
<div class="t" style="left:496px;top:492px;color:#888">No end date</div>
<div class="t" style="left:496px;top:519px;color:#888">End after</div>
<div class="a" style="left:545px;top:512px;width:60px;height:24px;background:#fff;border:1px solid #e2e2e2;border-radius:2px"></div><div class="a" style="left:590px;top:513px;width:1px;height:22px;background:#e8e8e8"></div><svg class="a" style="left:593px;top:515px" width="9" height="16" viewBox="0 0 9 16"><path d="M0.5 6 L4.5 1 L8.5 6 Z M0.5 10 L8.5 10 L4.5 15 Z" fill="#8a8a8a"/></svg><div class="t" style="left:551px;top:519px;color:#bdbdbd">10</div>
<div class="t" style="left:609px;top:520px">occurrences</div>
<div class="t" style="left:496px;top:547px;color:#888">End by</div>
<div class="a" style="left:533px;top:541px;width:120px;height:22px;background:#fff;border:1px solid #8a8a8a;border-radius:1px"></div>
<div class="a" style="left:638px;top:542px;width:14px;height:20px;background:#e8e5e8;border-left:1px solid #8a8a8a"></div><svg class="a" style="left:642px;top:548px" width="7" height="8" viewBox="0 0 7 8" shape-rendering="crispEdges"><rect x="0" y="0" width="7" height="7" fill="#777"/><rect x="1" y="1" width="1" height="1" fill="#fff"/><rect x="1" y="3" width="1" height="1" fill="#fff"/><rect x="1" y="5" width="1" height="1" fill="#fff"/><rect x="3" y="1" width="1" height="1" fill="#fff"/><rect x="3" y="3" width="1" height="1" fill="#fff"/><rect x="3" y="5" width="1" height="1" fill="#fff"/><rect x="5" y="1" width="1" height="1" fill="#fff"/><rect x="5" y="3" width="1" height="1" fill="#fff"/><rect x="5" y="5" width="1" height="1" fill="#fff"/><rect x="0" y="7" width="7" height="1" fill="#e8e5e8"/></svg>
<div class="t" style="left:539px;top:549px;color:#777">05/09/2014</div>
</div></body></html>
